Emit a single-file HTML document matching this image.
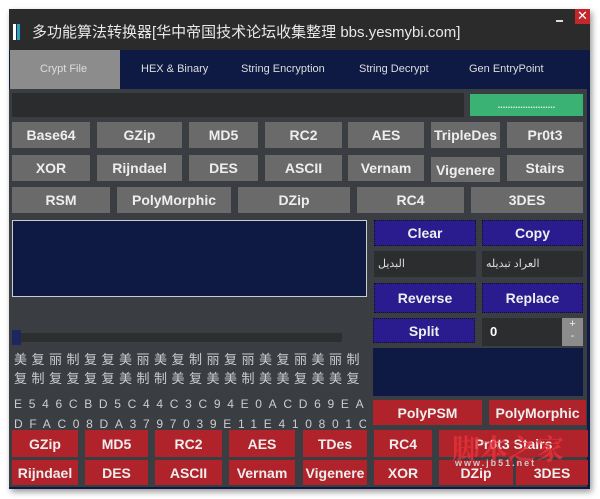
<!DOCTYPE html>
<html><head><meta charset="utf-8"><style>
body{margin:0;width:600px;height:499px;background:#fff;position:relative;overflow:hidden;font-family:"Liberation Sans","Noto Sans CJK SC",sans-serif}
.a{position:absolute;box-sizing:border-box}
.b{position:absolute;box-sizing:border-box;display:flex;align-items:center;justify-content:center;font-weight:bold;font-size:14px;color:#eee}
.g{background:#6a6a6a}
.u{background:#2a1b8e;border:1px dotted #111}
.r{background:#b1232a}
.t{position:absolute;color:#ddd;font-size:11px;top:63px}
.cn{position:absolute;left:14px;width:350px;overflow:hidden;color:#ccc;font-size:13px;letter-spacing:4.5px;white-space:nowrap}
.hx{position:absolute;left:14px;width:352px;overflow:hidden;color:#ccc;font-size:12px;letter-spacing:6.7px;white-space:nowrap;font-family:"Liberation Sans",sans-serif}
</style></head><body>
<div class="a" style="left:9px;top:9px;width:581px;height:480px;background:#0e1a44;box-shadow:2px 3px 6px #999"></div>
<div class="a" style="left:9px;top:9px;width:581px;height:41px;background:#2b2b2b"></div>
<div class="a" style="left:13px;top:24px;width:3px;height:16px;background:#fff"></div>
<div class="a" style="left:17px;top:24px;width:3px;height:16px;background:#2aa0c8"></div>
<div class="a" style="left:32px;top:21px;color:#e8e8e8;font-size:15px;white-space:nowrap">多功能算法转换器[华中帝国技术论坛收集整理 bbs.yesmybi.com]</div>
<div class="a" style="left:556px;top:20px;width:7px;height:2px;background:#ddd"></div>
<div class="a" style="left:575px;top:9px;width:15px;height:15px;background:#c1272d;color:#fff;font-size:13px;text-align:center;line-height:14px">✕</div>
<div class="a" style="left:10px;top:50px;width:110px;height:39px;background:#8c8c8c"></div>
<div class="t" style="left:40px">Crypt File</div>
<div class="t" style="left:141px">HEX &amp; Binary</div>
<div class="t" style="left:241px">String Encryption</div>
<div class="t" style="left:359px">String Decrypt</div>
<div class="t" style="left:469px">Gen EntryPoint</div>
<div class="a" style="left:9px;top:89px;width:578px;height:398px;background:#3a3e43"></div>
<div class="a" style="left:12px;top:93px;width:452px;height:24px;background:#2a2c2e"></div>
<div class="b" style="left:470px;top:94px;width:113px;height:22px;background:#39b274;font-size:9px">.......................</div>

<div class="b g" style="left:12px;top:122px;width:78px;height:26px">Base64</div>
<div class="b g" style="left:97px;top:122px;width:85px;height:26px">GZip</div>
<div class="b g" style="left:189px;top:122px;width:69px;height:26px">MD5</div>
<div class="b g" style="left:265px;top:122px;width:77px;height:26px">RC2</div>
<div class="b g" style="left:348px;top:122px;width:76px;height:26px">AES</div>
<div class="b g" style="left:431px;top:122px;width:69px;height:26px">TripleDes</div>
<div class="b g" style="left:507px;top:122px;width:76px;height:26px">Pr0t3</div>

<div class="b g" style="left:12px;top:155px;width:78px;height:26px">XOR</div>
<div class="b g" style="left:97px;top:155px;width:85px;height:26px">Rijndael</div>
<div class="b g" style="left:189px;top:155px;width:69px;height:26px">DES</div>
<div class="b g" style="left:265px;top:155px;width:77px;height:26px">ASCII</div>
<div class="b g" style="left:348px;top:155px;width:76px;height:26px">Vernam</div>
<div class="b g" style="left:431px;top:157px;width:69px;height:25px">Vigenere</div>
<div class="b g" style="left:507px;top:155px;width:76px;height:26px">Stairs</div>

<div class="b g" style="left:12px;top:187px;width:98px;height:26px">RSM</div>
<div class="b g" style="left:117px;top:187px;width:114px;height:26px">PolyMorphic</div>
<div class="b g" style="left:238px;top:187px;width:112px;height:26px">DZip</div>
<div class="b g" style="left:357px;top:187px;width:107px;height:26px">RC4</div>
<div class="b g" style="left:471px;top:187px;width:112px;height:26px">3DES</div>

<div class="a" style="left:12px;top:220px;width:355px;height:77px;background:#0e1a44;border:1px solid #ccc"></div>
<div class="b u" style="left:374px;top:220px;width:102px;height:26px">Clear</div>
<div class="b u" style="left:482px;top:220px;width:101px;height:26px">Copy</div>
<div class="a" style="left:374px;top:251px;width:102px;height:26px;background:#2b2d2f;color:#ddd;font-size:11px;padding:6px 4px">البديل</div>
<div class="a" style="left:482px;top:251px;width:101px;height:26px;background:#2b2d2f;color:#ddd;font-size:11px;padding:6px 4px;direction:ltr">العراد تبديله</div>
<div class="b u" style="left:374px;top:283px;width:102px;height:30px">Reverse</div>
<div class="b u" style="left:482px;top:283px;width:101px;height:30px">Replace</div>
<div class="b u" style="left:373px;top:318px;width:102px;height:25px">Split</div>
<div class="a" style="left:482px;top:318px;width:80px;height:28px;background:#2b2d2f;color:#fff;font-weight:bold;font-size:13px;padding:6px 8px">0</div>
<div class="a" style="left:562px;top:318px;width:21px;height:28px;background:#8c8c8c;color:#eee;font-size:11px;text-align:center;line-height:12px">+<br>-</div>

<div class="a" style="left:12px;top:333px;width:330px;height:9px;background:#2c2e30"></div>
<div class="a" style="left:12px;top:330px;width:9px;height:15px;background:#1e2660"></div>
<div class="cn" style="top:349px">美复丽制复复美丽美复制丽复丽美复丽美丽制</div>
<div class="cn" style="top:368px">复制复复复复美制制美复美美制美美复美美复</div>
<div class="hx" style="top:397px">E546CBD5C44C3C94E0ACD69EAF</div>
<div class="hx" style="top:417px">DFAC08DA3797039E11E410801C</div>

<div class="a" style="left:373px;top:348px;width:210px;height:48px;background:#0e1a44"></div>
<div class="b r" style="left:373px;top:400px;width:109px;height:25px">PolyPSM</div>
<div class="b r" style="left:489px;top:400px;width:97px;height:25px">PolyMorphic</div>

<div class="b r" style="left:12px;top:430px;width:66px;height:27px">GZip</div>
<div class="b r" style="left:85px;top:430px;width:63px;height:27px">MD5</div>
<div class="b r" style="left:155px;top:430px;width:67px;height:27px">RC2</div>
<div class="b r" style="left:229px;top:430px;width:66px;height:27px">AES</div>
<div class="b r" style="left:303px;top:430px;width:64px;height:27px">TDes</div>
<div class="b r" style="left:374px;top:430px;width:58px;height:27px">RC4</div>
<div class="b r" style="left:439px;top:430px;width:149px;height:27px">Pr0t3 Stairs</div>
<div class="b r" style="left:12px;top:460px;width:66px;height:25px">Rijndael</div>
<div class="b r" style="left:85px;top:460px;width:63px;height:25px">DES</div>
<div class="b r" style="left:155px;top:460px;width:67px;height:25px">ASCII</div>
<div class="b r" style="left:229px;top:460px;width:66px;height:25px">Vernam</div>
<div class="b r" style="left:303px;top:460px;width:64px;height:25px">Vigenere</div>
<div class="b r" style="left:374px;top:460px;width:58px;height:25px">XOR</div>
<div class="b r" style="left:439px;top:460px;width:74px;height:25px">DZip</div>
<div class="b r" style="left:516px;top:460px;width:72px;height:25px">3DES</div>
<div class="a" style="left:452px;top:428px;color:#e8323a;font-size:28px;font-family:'Noto Serif CJK SC',serif;font-weight:bold;opacity:.8;white-space:nowrap">脚本之家</div>
<div class="a" style="left:455px;top:458px;color:#ccc;font-size:9px;letter-spacing:2px;font-weight:bold">www.jb51.net</div>
</body></html>
